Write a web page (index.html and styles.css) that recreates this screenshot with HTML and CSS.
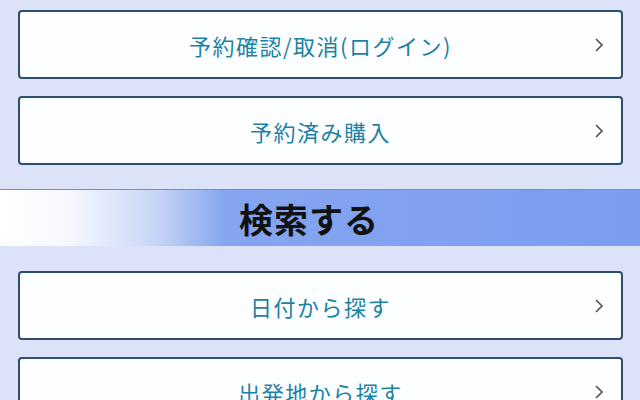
FILE: index.html
```html
<!DOCTYPE html>
<html lang="ja">
<head>
<meta charset="utf-8">
<link rel="stylesheet" href="styles.css">
</head>
<body>
<div class="page">
  <a class="btn first">予約確認/取消(ログイン)<span class="chev"><svg width="10" height="16" viewBox="0 0 10 16"><path d="M2 2 L8 8 L2 14" fill="none" stroke="#555" stroke-width="1.7"/></svg></span></a>
  <a class="btn">予約済み購入<span class="chev"><svg width="10" height="16" viewBox="0 0 10 16"><path d="M2 2 L8 8 L2 14" fill="none" stroke="#555" stroke-width="1.7"/></svg></span></a>
  <div class="bar"><h2 class="bar-title">検索する</h2></div>
  <a class="btn">日付から探す<span class="chev"><svg width="10" height="16" viewBox="0 0 10 16"><path d="M2 2 L8 8 L2 14" fill="none" stroke="#555" stroke-width="1.7"/></svg></span></a>
  <a class="btn">出発地から探す<span class="chev"><svg width="10" height="16" viewBox="0 0 10 16"><path d="M2 2 L8 8 L2 14" fill="none" stroke="#555" stroke-width="1.7"/></svg></span></a>
</div>
</body>
</html>
```

FILE: styles.css
```css
html, body {
  margin: 0;
  padding: 0;
  background: #dce3f8;
  height: 400px;
  overflow: hidden;
}
.page {
  display: flex;
  flex-direction: column;
  padding-top: 10px;
  font-family: "Noto Sans CJK JP", "Noto Sans", sans-serif;
}
.btn {
  position: relative;
  display: flex;
  align-items: center;
  justify-content: center;
  box-sizing: border-box;
  height: 69px;
  margin: 0 17px 17px 18px;
  background: #fdfeff;
  border: 2px solid #2d4e70;
  border-radius: 4px;
  color: #1c82a4;
  font-size: 22px;
  letter-spacing: 1.5px;
  text-decoration: none;
  flex-shrink: 0;
}
.chev {
  position: absolute;
  right: 17px;
  top: 50%;
  margin-top: -8px;
  line-height: 0;
}
.bar {
  height: 57px;
  margin: 7px 0 25px;
  background: linear-gradient(90deg, #ffffff 0px, #f6f8fe 70px, #c4d3f6 160px, #85a5ef 225px, #7a9def 640px);
  border-top: 1px solid #6b8fd8;
  box-sizing: border-box;
  display: flex;
  align-items: center;
  justify-content: center;
  flex-shrink: 0;
}
.bar-title {
  margin: 0 22px 0 0;
  font-size: 34px;
  font-weight: bold;
  color: #111;
  letter-spacing: 1px;
}
```
